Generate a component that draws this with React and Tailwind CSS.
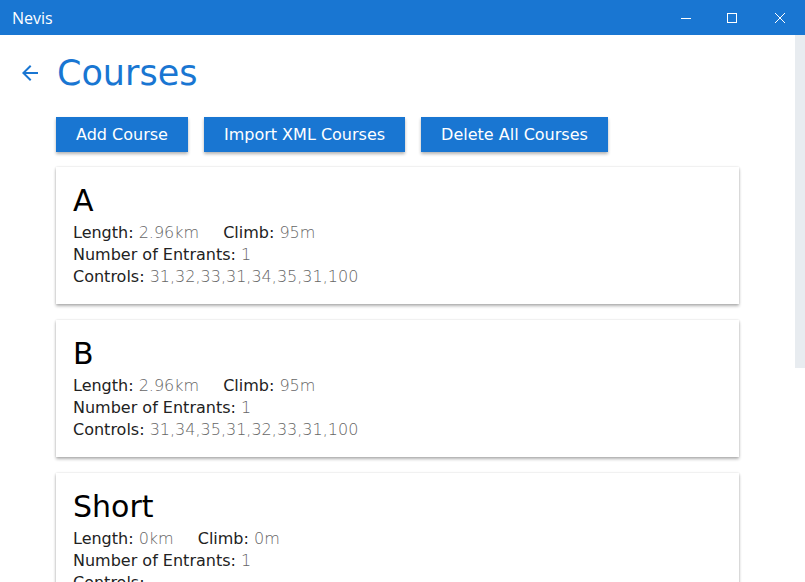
import React from 'react';

const courses = [
  { name: 'A', length: '2.96km', climb: '95m', entrants: 1, controls: '31,32,33,31,34,35,31,100' },
  { name: 'B', length: '2.96km', climb: '95m', entrants: 1, controls: '31,34,35,31,32,33,31,100' },
  { name: 'Short', length: '0km', climb: '0m', entrants: 1, controls: '' },
];

function TitleBar() {
  return (
    <div className="h-[35px] bg-[#1976d2] flex items-center justify-between text-white shrink-0">
      <span className="pl-3 text-[16px] font-['Open_Sans',sans-serif]">Nevis</span>
      <div className="flex h-full">
        <div className="w-[46px] h-full flex items-center justify-center">
          <svg width="10" height="10" viewBox="0 0 10 10"><path d="M0 5.5h10" stroke="white" strokeWidth="1" /></svg>
        </div>
        <div className="w-[46px] h-full flex items-center justify-center">
          <svg width="10" height="10" viewBox="0 0 10 10"><rect x="0.5" y="0.5" width="9" height="9" fill="none" stroke="white" strokeWidth="1" /></svg>
        </div>
        <div className="w-[50px] h-full flex items-center justify-center">
          <svg width="10" height="10" viewBox="0 0 10 10"><path d="M0 0L10 10M10 0L0 10" stroke="white" strokeWidth="1" /></svg>
        </div>
      </div>
    </div>
  );
}

function CourseCard({ course }) {
  return (
    <div className="bg-white px-[17px] pt-[13px] pb-4 shadow-[0_0_2px_rgba(0,0,0,0.12),0_2px_3px_rgba(0,0,0,0.3)]">
      <h2 className="text-[30px] leading-[42px] text-black">{course.name}</h2>
      <div className="text-[16px] leading-[22px] text-[#222]">
        <div className="flex gap-[24px]">
          <span>Length: <span className="text-[#666] font-light">{course.length}</span></span>
          <span>Climb: <span className="text-[#666] font-light">{course.climb}</span></span>
        </div>
        <div>Number of Entrants: <span className="text-[#666] font-light">{course.entrants}</span></div>
        <div>Controls: <span className="text-[#666] font-light">{course.controls}</span></div>
      </div>
    </div>
  );
}

export default function App() {
  return (
    <div className="w-[805px] h-[582px] flex flex-col overflow-hidden bg-white font-['DejaVu_Sans',sans-serif]">
      <TitleBar />
      <div className="flex flex-1 min-h-0">
        <div className="flex-1 overflow-hidden">
          {/* Cabecera */}
          <div className="flex items-center h-[48px] mt-[14px] pl-[18px]">
            <svg width="24" height="24" viewBox="0 0 24 24" className="shrink-0">
              <path d="M20 11H7.83l5.59-5.59L12 4l-8 8 8 8 1.41-1.41L7.83 13H20v-2z" fill="#1976d2" />
            </svg>
            <h1 className="ml-[15px] text-[35px] leading-[48px] text-[#1976d2]">Courses</h1>
          </div>

          <div className="px-14 mt-5 flex gap-4">
            <button className="h-[35px] px-5 bg-[#1976d2] text-white text-[16px] shadow-[0_2px_3px_rgba(0,0,0,0.3)]">Add Course</button>
            <button className="h-[35px] px-5 bg-[#1976d2] text-white text-[16px] shadow-[0_2px_3px_rgba(0,0,0,0.3)]">Import XML Courses</button>
            <button className="h-[35px] px-5 bg-[#1976d2] text-white text-[16px] shadow-[0_2px_3px_rgba(0,0,0,0.3)]">Delete All Courses</button>
          </div>

          <div className="px-14 mt-[15px] flex flex-col gap-4">
            {courses.map(c => <CourseCard key={c.name} course={c} />)}
          </div>
        </div>
        {/* Barra de scroll */}
        <div className="w-[10px] shrink-0">
          <div className="h-[333px] bg-[#e8ecf0]" />
        </div>
      </div>
    </div>
  );
}
